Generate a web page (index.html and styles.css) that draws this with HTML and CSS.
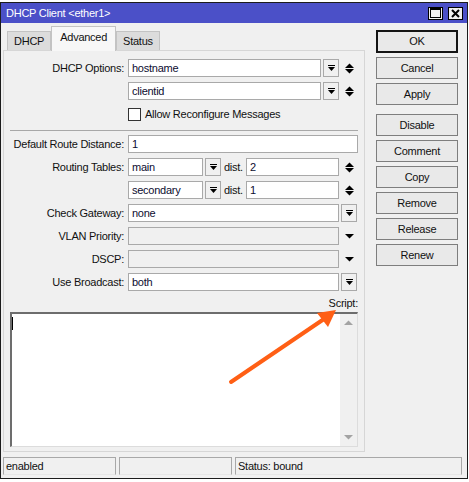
FILE: index.html
```html
<!DOCTYPE html>
<html>
<head>
<meta charset="utf-8">
<link rel="stylesheet" href="styles.css">
</head>
<body>
<div class="window">
  <div class="titlebar">
    <span class="title">DHCP Client &lt;ether1&gt;</span>
    <span class="tbtns">
      <span class="tb"><svg width="11" height="10" viewBox="0 0 11 10"><rect x="0.5" y="0.5" width="10" height="9" fill="none" stroke="#000" stroke-width="1"/><rect x="0" y="0" width="11" height="2" fill="#000"/></svg></span>
      <span class="tb"><svg width="9" height="9" viewBox="0 0 9 9"><path d="M1 1 L8 8 M8 1 L1 8" stroke="#000" stroke-width="2"/></svg></span>
    </span>
  </div>
  <div class="main">
    <div class="left">
      <div class="tabs">
        <div class="tab">DHCP</div>
        <div class="tab sel">Advanced</div>
        <div class="tab">Status</div>
      </div>
      <div class="panel">
        <div class="row">
          <div class="lbl">DHCP Options:</div>
          <div class="field">
            <div class="inp">hostname</div>
            <div class="dd"><svg width="7" height="7" viewBox="0 0 7 7"><rect x="0" y="0" width="7" height="1" fill="#000"/><polygon points="0,2 7,2 3.5,6" fill="#000"/></svg></div>
            <div class="spin"><svg width="9" height="11" viewBox="0 0 9 11"><polygon points="0,5 4.5,0.5 9,5" fill="#000"/><polygon points="0,6 9,6 4.5,10.5" fill="#000"/></svg></div>
          </div>
        </div>
        <div class="row">
          <div class="lbl"></div>
          <div class="field">
            <div class="inp">clientid</div>
            <div class="dd"><svg width="7" height="7" viewBox="0 0 7 7"><rect x="0" y="0" width="7" height="1" fill="#000"/><polygon points="0,2 7,2 3.5,6" fill="#000"/></svg></div>
            <div class="spin"><svg width="9" height="11" viewBox="0 0 9 11"><polygon points="0,5 4.5,0.5 9,5" fill="#000"/><polygon points="0,6 9,6 4.5,10.5" fill="#000"/></svg></div>
          </div>
        </div>
        <div class="row">
          <div class="lbl"></div>
          <div class="field">
            <span class="chk"></span><span>Allow Reconfigure Messages</span>
          </div>
        </div>
        <div class="sep"></div>
        <div class="row">
          <div class="lbl">Default Route Distance:</div>
          <div class="field"><div class="inp">1</div></div>
        </div>
        <div class="row">
          <div class="lbl">Routing Tables:</div>
          <div class="field">
            <div class="inp w75">main</div>
            <div class="dd"><svg width="7" height="7" viewBox="0 0 7 7"><rect x="0" y="0" width="7" height="1" fill="#000"/><polygon points="0,2 7,2 3.5,6" fill="#000"/></svg></div>
            <span class="dist">dist.</span>
            <div class="inp">2</div>
            <div class="spin"><svg width="9" height="11" viewBox="0 0 9 11"><polygon points="0,5 4.5,0.5 9,5" fill="#000"/><polygon points="0,6 9,6 4.5,10.5" fill="#000"/></svg></div>
          </div>
        </div>
        <div class="row">
          <div class="lbl"></div>
          <div class="field">
            <div class="inp w75">secondary</div>
            <div class="dd"><svg width="7" height="7" viewBox="0 0 7 7"><rect x="0" y="0" width="7" height="1" fill="#000"/><polygon points="0,2 7,2 3.5,6" fill="#000"/></svg></div>
            <span class="dist">dist.</span>
            <div class="inp">1</div>
            <div class="spin"><svg width="9" height="11" viewBox="0 0 9 11"><polygon points="0,5 4.5,0.5 9,5" fill="#000"/><polygon points="0,6 9,6 4.5,10.5" fill="#000"/></svg></div>
          </div>
        </div>
        <div class="row">
          <div class="lbl">Check Gateway:</div>
          <div class="field">
            <div class="inp">none</div>
            <div class="dd end"><svg width="7" height="7" viewBox="0 0 7 7"><rect x="0" y="0" width="7" height="1" fill="#000"/><polygon points="0,2 7,2 3.5,6" fill="#000"/></svg></div>
          </div>
        </div>
        <div class="row">
          <div class="lbl">VLAN Priority:</div>
          <div class="field">
            <div class="inp dis"></div>
            <div class="spin"><svg width="9" height="5" viewBox="0 0 9 5"><polygon points="0,0 9,0 4.5,4.5" fill="#000"/></svg></div>
          </div>
        </div>
        <div class="row">
          <div class="lbl">DSCP:</div>
          <div class="field">
            <div class="inp dis"></div>
            <div class="spin"><svg width="9" height="5" viewBox="0 0 9 5"><polygon points="0,0 9,0 4.5,4.5" fill="#000"/></svg></div>
          </div>
        </div>
        <div class="row">
          <div class="lbl">Use Broadcast:</div>
          <div class="field">
            <div class="inp">both</div>
            <div class="dd end"><svg width="7" height="7" viewBox="0 0 7 7"><rect x="0" y="0" width="7" height="1" fill="#000"/><polygon points="0,2 7,2 3.5,6" fill="#000"/></svg></div>
          </div>
        </div>
        <div class="script-lbl">Script:</div>
        <div class="textarea">
          <span class="caret"></span>
          <div class="scroll">
            <svg width="9" height="5" viewBox="0 0 9 5"><polygon points="0,5 4.5,0.5 9,5" fill="#a3a3a3"/></svg>
            <svg width="9" height="5" viewBox="0 0 9 5"><polygon points="0,0 9,0 4.5,4.5" fill="#a3a3a3"/></svg>
          </div>
        </div>
      </div>
    </div>
    <div class="buttons">
      <div class="btn ok">OK</div>
      <div class="btn">Cancel</div>
      <div class="btn">Apply</div>
      <div class="btn gap">Disable</div>
      <div class="btn">Comment</div>
      <div class="btn">Copy</div>
      <div class="btn">Remove</div>
      <div class="btn">Release</div>
      <div class="btn">Renew</div>
    </div>
  </div>
  <div class="status">
    <div class="cell c1">enabled</div>
    <div class="cell c2"></div>
    <div class="cell c3">Status: bound</div>
  </div>
</div>
<svg class="arrow" width="469" height="482" viewBox="0 0 469 482">
  <line x1="231" y1="382" x2="324" y2="319" stroke="#ff5f15" stroke-width="4" stroke-linecap="round"/>
  <polygon points="336,310 317,313 328,327" fill="#ff5f15"/>
</svg>
</body>
</html>
```
FILE: styles.css
```css
* { box-sizing: border-box; }
html, body { margin: 0; padding: 0; background: #fff; }
body {
  font-family: "Liberation Sans", Arial, sans-serif;
  font-size: 11px;
  letter-spacing: -0.25px;
  color: #111;
  width: 469px;
  height: 482px;
  position: relative;
  overflow: hidden;
}
.window {
  margin-top: 2px;
  width: 468px;
  height: 477px;
  border: 1px solid #1c1c1c;
  background: #f0f0f0;
  display: flex;
  flex-direction: column;
}
.titlebar {
  height: 20px;
  background: #4b50c8;
  color: #fff;
  display: flex;
  align-items: center;
  justify-content: space-between;
  padding-left: 5px;
  padding-right: 4px;
  flex: none;
}
.title { font-size: 11px; }
.tbtns { display: flex; gap: 5px; }
.tb {
  width: 15px;
  height: 13px;
  background: #f0f0f0;
  border: 1px solid #000;
  display: flex;
  align-items: center;
  justify-content: center;
}
.main { display: flex; height: 429px; flex: none; }
.left { margin-left: 2px; width: 362px; display: flex; flex-direction: column; }
.tabs {
  height: 27px;
  display: flex;
  align-items: flex-end;
  padding-left: 4px;
  position: relative;
  z-index: 1;
}
.tab {
  height: 19px;
  padding: 0 6px;
  line-height: 18px;
  background: #dcdcdc;
  border: 1px solid #c3c3c3;
  border-bottom: none;
  font-size: 11px;
}
.tab.sel {
  height: 25px;
  margin-bottom: -1px;
  background: #f7f7f7;
  line-height: 20px;
  padding: 0 8px;
  border-color: #c3c3c3;
}
.panel {
  height: 402px;
  border: 1px solid #d6d6d6;
  background: #f0f0f0;
  padding: 8px 6px 4px 0;
  display: flex;
  flex-direction: column;
}
.row { display: flex; align-items: center; height: 18px; margin-bottom: 5px; flex: none; }
.lbl { width: 120px; margin-right: 4px; text-align: right; flex: none; white-space: nowrap; }
.field { flex: 1; display: flex; align-items: center; height: 18px; }
.inp {
  flex: 1;
  height: 18px;
  background: #fff;
  border: 1px solid #a9a9a9;
  padding: 0 3px;
  line-height: 16px;
  white-space: nowrap;
  overflow: hidden;
  color: #0c0c30;
}
.inp.w75 { flex: none; width: 75px; }
.inp.dis { background: #f0f0f0; }
.dd {
  flex: none;
  width: 16px;
  height: 18px;
  margin-left: 2px;
  border: 1px solid #a9a9a9;
  background: #f0f0f0;
  display: flex;
  align-items: center;
  justify-content: center;
}
.dd.end { margin-right: 1px; }
.spin { flex: none; width: 19px; display: flex; justify-content: center; align-items: center; padding-left: 1px; }
.dist { margin: 0 3px 0 3px; }
.chk {
  width: 13px;
  height: 13px;
  border: 1px solid #333;
  background: #fff;
  margin-right: 4px;
  flex: none;
}
.sep { margin: 2px 0 4px 6px; border-top: 1px solid #a8a8a8; height: 1px; flex: none; }
.script-lbl { text-align: right; height: 14px; line-height: 14px; flex: none; margin-bottom: 2px; }
.textarea {
  flex: 1;
  margin-left: 6px;
  background: #fff;
  border-top: 2px solid #6d6d6d;
  border-left: 2px solid #6d6d6d;
  border-right: 1px solid #dcdcdc;
  border-bottom: 1px solid #dcdcdc;
  display: flex;
  justify-content: space-between;
}
.caret { width: 1px; height: 13px; background: #000; margin-top: 3px; }
.scroll {
  width: 17px;
  background: #f0f0f0;
  display: flex;
  flex-direction: column;
  justify-content: space-between;
  align-items: center;
  padding: 6px 0 6px;
}
.buttons { margin-left: 11px; width: 82px; padding-top: 7px; display: flex; flex-direction: column; }
.btn {
  height: 22px;
  margin-bottom: 4px;
  border: 1px solid #7e7e7e;
  background: #e9e9e9;
  text-align: center;
  line-height: 20px;
  font-size: 11px;
  flex: none;
}
.btn.ok { height: 23px; border: 2px solid #141414; line-height: 19px; }
.btn.gap { margin-top: 5px; }
.status { display: flex; margin: 5px 0 0 2px; gap: 3px; height: 18px; flex: none; }
.cell {
  height: 18px;
  border: 1px solid #a8a8a8;
  border-bottom-color: #e6e6e6;
  padding-left: 2px;
  line-height: 16px;
}
.c1, .c2 { width: 113px; }
.c3 { width: 227px; }
.arrow { position: absolute; left: 0; top: 0; pointer-events: none; }
```
